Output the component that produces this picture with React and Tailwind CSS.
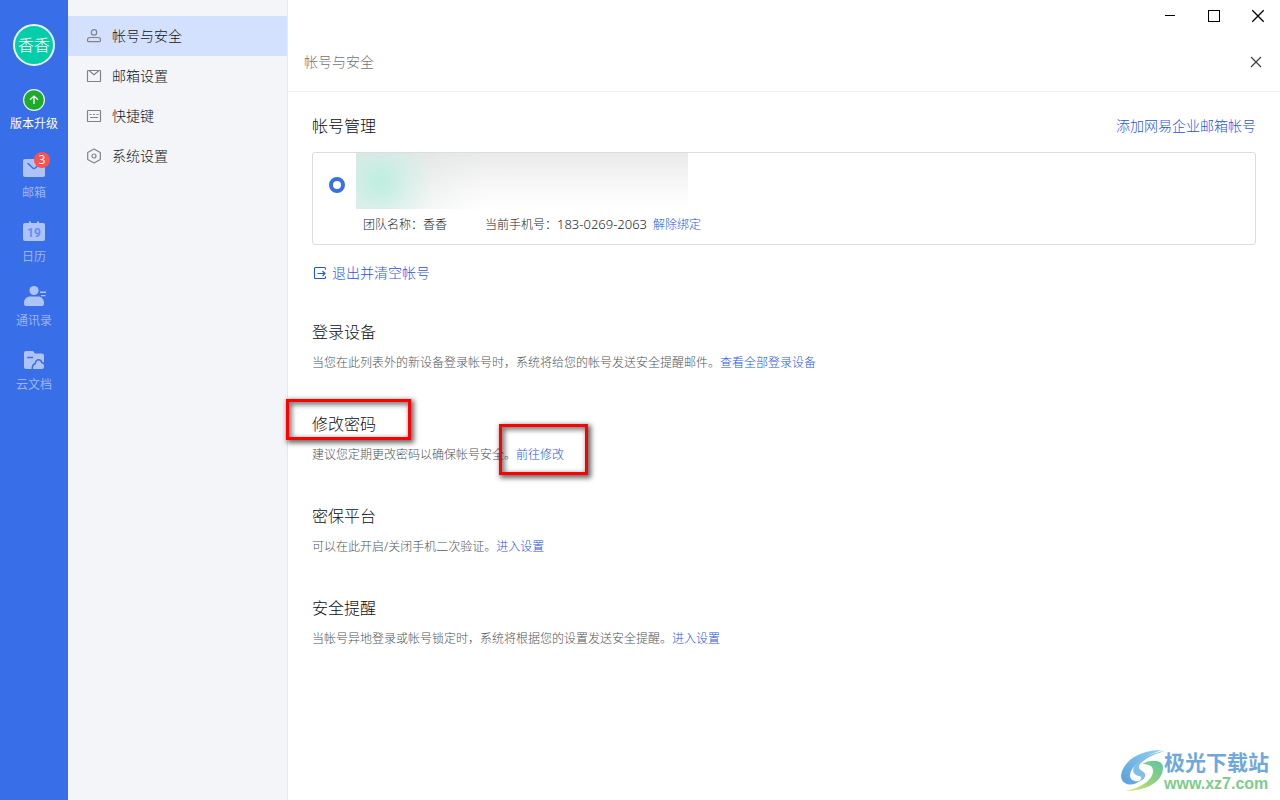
import clsx from 'clsx';

const NAV_ITEMS = [
	{ label: '帐号与安全', icon: UserIcon, active: true },
	{ label: '邮箱设置', icon: EnvelopeIcon },
	{ label: '快捷键', icon: KeyboardIcon },
	{ label: '系统设置', icon: HexagonIcon },
];

const APPS = [
	{ label: '邮箱', icon: MailAppIcon, badge: 3 },
	{ label: '日历', icon: CalendarAppIcon },
	{ label: '通讯录', icon: ContactsAppIcon },
	{ label: '云文档', icon: DocsAppIcon },
];

const SECTIONS = [
	{
		title: '登录设备',
		text: '当您在此列表外的新设备登录帐号时，系统将给您的帐号发送安全提醒邮件。',
		link: '查看全部登录设备',
	},
	{
		title: '修改密码',
		text: '建议您定期更改密码以确保帐号安全。',
		link: '前往修改',
		marked: true,
	},
	{
		title: '密保平台',
		text: '可以在此开启/关闭手机二次验证。',
		link: '进入设置',
	},
	{
		title: '安全提醒',
		text: '当帐号异地登录或帐号锁定时，系统将根据您的设置发送安全提醒。',
		link: '进入设置',
	},
];

function UserIcon() {
	return (
		<svg className="size-4" viewBox="0 0 16 16" fill="none" stroke="currentColor" strokeWidth="1.2">
			<circle cx="8" cy="4.4" r="2.7" />
			<path d="M4 9.500h8c1.500 0 2.500 1.100 2.500 2.500v.6c0 .6-.4 1-1 1h-11c-.6 0-1-.4-1-1V12c0-1.400 1-2.500 2.500-2.500z" />
		</svg>
	);
}

function EnvelopeIcon() {
	return (
		<svg className="size-4" viewBox="0 0 16 16" fill="none" stroke="currentColor" strokeWidth="1.2">
			<rect x="1.5" y="2.5" width="13" height="11" rx="0.6" />
			<path d="M3.200 2.800 8 6.700l4.800-3.900" />
		</svg>
	);
}

function KeyboardIcon() {
	return (
		<svg className="size-4" viewBox="0 0 16 16" fill="none" stroke="currentColor" strokeWidth="1.2">
			<rect x="1.5" y="2.5" width="13" height="11" rx="0.6" />
			<path d="M3.500 6.500h2m1.500 0h2m1.500 0h2M4 9.500h8" />
		</svg>
	);
}

function HexagonIcon() {
	return (
		<svg className="size-4" viewBox="0 0 16 16" fill="none" stroke="currentColor" strokeWidth="1.2">
			<path d="M8 1l6.300 3.500v7L8 15l-6.300-3.500v-7z" strokeLinejoin="round" />
			<circle cx="8" cy="8" r="2" />
		</svg>
	);
}

function MailAppIcon() {
	return (
		<svg className="size-6" viewBox="0 0 24 24">
			<rect x="1" y="3" width="22" height="18" rx="2" fill="#aec4f7" />
			<path d="M6 7.500l4.800 4.500c.7.600 1.700.600 2.400 0L18 7.500" fill="none" stroke="#386ee7" strokeWidth="1.5" strokeLinecap="round" />
		</svg>
	);
}

function CalendarAppIcon() {
	return (
		<svg className="size-6" viewBox="0 0 24 24">
			<path d="M7 1.500h2V3H7zM15 1.500h2V3h-2z" fill="#aec4f7" />
			<rect x="1" y="3" width="22" height="18" rx="2" fill="#aec4f7" />
			<text x="12" y="17" textAnchor="middle" fill="#648eee" fontFamily="Roboto, sans-serif" fontSize="12" fontWeight="700">
				19
			</text>
		</svg>
	);
}

function ContactsAppIcon() {
	return (
		<svg className="size-6" viewBox="0 0 24 24">
			<g fill="#aec4f7">
				<circle cx="12" cy="6.5" r="4.6" />
				<path d="M8 12.500h8c3.300 0 6 2.700 6 6v1.500c0 1.100-.9 2-2 2H4c-1.100 0-2-.9-2-2v-1.500c0-3.300 2.700-6 6-6z" />
				<path d="M18 7.500h6V9h-6zM19 11h4.500v1.200H19z" />
			</g>
		</svg>
	);
}

function DocsAppIcon() {
	return (
		<svg className="size-6" viewBox="0 0 24 24">
			<path d="M4 3h6.200c.5 0 1 .2 1.300.6L13 5.500h7c1.100 0 2 .9 2 2V19c0 1.100-.9 2-2 2H4c-1.100 0-2-.9-2-2V5c0-1.100.9-2 2-2z" fill="#aec4f7" />
			<path d="M5 9.500h6" stroke="#386ee7" strokeWidth="1.5" />
			<path d="M10.300 21c-.2-3 1-4.700 2.800-5.200.5-2.600 1.700-4 3.500-4 1.900 0 2.700 1.200 3.200 2.800 1.100.1 1.900.8 2.500 1.700" fill="none" stroke="#386ee7" strokeWidth="1.5" />
		</svg>
	);
}

function ExitIcon() {
	return (
		<svg className="size-4" viewBox="0 0 16 16" fill="none" stroke="currentColor" strokeWidth="1.1">
			<path d="M13.500 4.800V3.500c0-.6-.4-1-1-1h-9c-.6 0-1 .4-1 1v9c0 .6.400 1 1 1h9c.6 0 1-.4 1-1v-1.300" />
			<path d="M5.500 8.500h7.500M10.500 6 13 8.500 10.500 11" />
		</svg>
	);
}

function CloseIcon() {
	return (
		<svg className="size-4" viewBox="0 0 16 16" stroke="currentColor" strokeWidth="1.2">
			<path d="M3 3l10 10M13 3L3 13" />
		</svg>
	);
}

const TextLink = ( { children } ) => (
	<a href="#" className="text-[#1f55e6]">
		{ children }
	</a>
);

const Marker = ( { className } ) => (
	<span
		aria-hidden="true"
		className={ clsx(
			'pointer-events-none absolute border-[3px] border-[#fe0000] shadow-[2px_2px_5px_1px_rgba(0,0,0,0.6),inset_2px_2px_5px_1px_rgba(0,0,0,0.5)]',
			className
		) }
	/>
);

const AppBar = () => (
	<aside className="flex w-[68px] shrink-0 flex-col items-center bg-[#386ee7] pt-6 text-xs leading-[18px] font-normal">
		<div className="flex size-[42px] items-center justify-center rounded-full border-2 border-[#e8f7f8] bg-[#04cdaa] text-base font-light text-white">
			香香
		</div>
		<button type="button" className="mt-[23px] flex flex-col items-center gap-1 text-white">
			<svg className="size-[22px]" viewBox="0 0 22 22" fill="none">
				<circle cx="11" cy="11" r="10.4" fill="#1eaa2b" stroke="#e6f3ee" strokeWidth="1.2" />
				<path d="M11 15V7.500M7 10.800l4-3.700 4 3.700" stroke="#fff" strokeWidth="1.3" />
			</svg>
			版本升级
		</button>
		<nav className="mt-[23px] flex flex-col gap-[18px]">
			{ APPS.map( ( { label, icon: Icon, badge } ) => (
				<a key={ label } href="#" className="flex flex-col items-center gap-1 text-[#9bb6f3]">
					<span className="relative">
						<Icon />
						{ badge && (
							<span className="absolute -top-1 -right-1 flex size-4 items-center justify-center rounded-full bg-[#fa5151] text-white">
								{ badge }
							</span>
						) }
					</span>
					{ label }
				</a>
			) ) }
		</nav>
	</aside>
);

const SettingsNav = () => (
	<nav className="w-[220px] shrink-0 border-r border-[#e6e8ed] bg-[#f3f5f9] pt-4">
		{ NAV_ITEMS.map( ( { label, icon: Icon, active } ) => (
			<a
				key={ label }
				href="#"
				className={ clsx(
					'flex h-10 items-center gap-2.5 pl-[18px] text-sm text-[#11151d]',
					active && 'bg-[#d4e1fe]'
				) }
			>
				<span className="text-[#808389]">
					<Icon />
				</span>
				{ label }
			</a>
		) ) }
	</nav>
);

const WindowControls = () => (
	<div className="flex h-8 justify-end text-black">
		<button type="button" aria-label="最小化" className="flex w-11 items-center justify-center">
			<svg className="size-4" viewBox="0 0 16 16" stroke="currentColor">
				<path d="M3 7.500h10" />
			</svg>
		</button>
		<button type="button" aria-label="最大化" className="flex w-11 items-center justify-center">
			<svg className="size-4" viewBox="0 0 16 16" fill="none" stroke="currentColor">
				<rect x="2.5" y="2.5" width="11" height="11" />
			</svg>
		</button>
		<button type="button" aria-label="关闭窗口" className="flex w-11 items-center justify-center">
			<svg className="size-4" viewBox="0 0 16 16" stroke="currentColor" strokeWidth="1.3">
				<path d="M2.300 2.300l11.400 11.400M13.700 2.300L2.300 13.700" />
			</svg>
		</button>
	</div>
);

const AccountCard = () => (
	<div className="mt-3.5 rounded-[3px] border border-[#dcdddf]">
		<div className="flex items-start pl-4">
			<input
				type="radio"
				name="account"
				aria-label="香香"
				defaultChecked
				className="mt-6 size-4 appearance-none rounded-full border-4 border-[#386ee7] bg-white"
			/>
			<div className="ml-[11px] h-14 w-[332px] bg-[radial-gradient(circle_at_24px_28px,#bfeee0_0,rgba(196,238,226,0.9)_12px,rgba(205,240,230,0.5)_30px,transparent_54px),linear-gradient(to_right,rgba(215,225,222,0.6)_0,transparent_130px),linear-gradient(to_bottom,#e9eae9_0,#f2f2f2_35%,#f9f9f9_65%,#ffffff_100%)]" />
		</div>
		<div className="flex items-center pt-[7px] pb-[11px] pl-[50px] text-xs leading-[17px] text-[#22252b]">
			<span className="w-[122px]">团队名称：香香</span>
			<span>当前手机号：</span>
			<span className="mr-1.5 text-[13px]">183-0269-2063</span>
			<TextLink>解除绑定</TextLink>
		</div>
	</div>
);

const Section = ( { title, text, link, marked } ) => (
	<section className="mb-[38px]">
		<h2 className="relative text-base leading-6 text-[#0b0f16]">
			{ title }
			{ marked && <Marker className="-top-[13px] -left-[26px] h-[41px] w-[125px]" /> }
		</h2>
		<p className="mt-2 text-xs leading-[22px] text-[#505359]">
			{ text }
			<span className="relative">
				<TextLink>{ link }</TextLink>
				{ marked && <Marker className="-top-[22px] -left-[17px] h-[51px] w-[89px]" /> }
			</span>
		</p>
	</section>
);

const Watermark = () => (
	<div className="absolute right-[11px] bottom-1.5 flex items-start">
		<svg className="h-11 w-12" viewBox="0 0 48 44">
			<defs>
				<linearGradient id="swoosh-blue" x1="0" y1="1" x2="1" y2="0">
					<stop offset="0" stopColor="#5a9fdd" />
					<stop offset="1" stopColor="#8fd0f2" />
				</linearGradient>
				<linearGradient id="swoosh-green" x1="0" y1="1" x2="1" y2="0">
					<stop offset="0" stopColor="#e8e86a" />
					<stop offset="0.5" stopColor="#8fd37b" />
					<stop offset="1" stopColor="#5fc3a8" />
				</linearGradient>
			</defs>
			<path d="M42 0C28 0 15 4 7 13 0 21-1 30 5 33c5 3 11 1 15-2-6 1-10-1-10-6C11 16 23 6 42 0z" fill="url(#swoosh-blue)" />
			<path d="M45 1C32 3 20 8 15 15c-4 6-1 10 4 11 4 1 2 4-1 6 7-2 10-8 4-11-4-2-4-5-1-8 5-5 13-9 24-12z" fill="#82bce8" />
			<path d="M22 14c9-5 22-5 21 5-1 12-15 22-38 22 16-3 28-11 28-20 0-5-4-7-11-7z" fill="url(#swoosh-green)" />
		</svg>
		<div className="-ml-1 flex flex-col font-bold">
			<span className="text-[21px] leading-6 text-[#6fa8dc]">极光下载站</span>
			<span className="font-['Liberation_Sans',sans-serif] text-base leading-5 text-[#7dcc8d]">
				www.xz7.com
			</span>
		</div>
	</div>
);

const App = () => (
	<div className="relative flex min-h-screen bg-white font-['Noto_Sans','Noto_Sans_CJK_SC',sans-serif] font-light">
		<AppBar />
		<SettingsNav />
		<main className="min-w-0 flex-1">
			<WindowControls />
			<header className="flex h-[60px] items-center justify-between border-b border-[#eeeff0] px-4">
				<h1 className="text-sm text-[#707378]">帐号与安全</h1>
				<button type="button" aria-label="关闭" className="text-[#3b3e44]">
					<CloseIcon />
				</button>
			</header>
			<div className="px-6 pt-[22px]">
				<div className="flex items-center justify-between">
					<h2 className="text-base leading-6 text-[#0b0f16]">帐号管理</h2>
					<a href="#" className="text-sm text-[#1f55e6]">
						添加网易企业邮箱帐号
					</a>
				</div>
				<AccountCard />
				<button type="button" className="mt-[18px] mb-[37px] flex items-center gap-1 text-sm text-[#1f55e6]">
					<ExitIcon />
					退出并清空帐号
				</button>
				{ SECTIONS.map( ( section ) => (
					<Section key={ section.title } { ...section } />
				) ) }
			</div>
		</main>
		<Watermark />
	</div>
);

export default App;
